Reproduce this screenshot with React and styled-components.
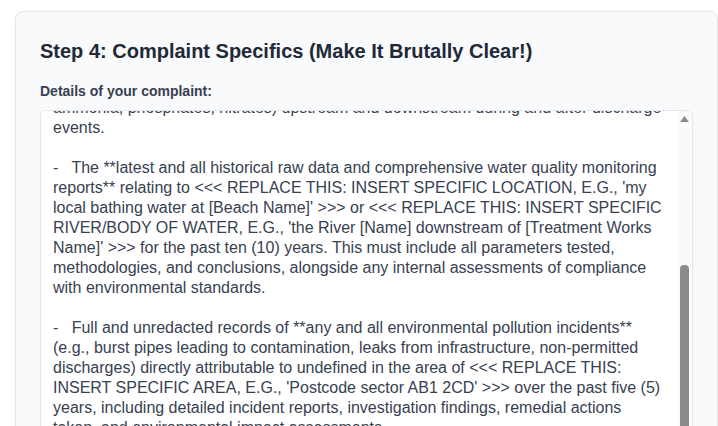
import React, { useLayoutEffect, useRef, useState } from 'react';
import styled, { createGlobalStyle } from 'styled-components';

const GlobalStyle = createGlobalStyle`
  html, body {
    margin: 0;
    padding: 0;
    background: #ffffff;
    overflow: hidden;
  }
  body {
    font-family: "Liberation Sans", Arial, sans-serif;
  }
`;

const Page = styled.div`
  padding: 11px 0 0 15px;
`;

const Card = styled.section`
  width: 703px;
  box-sizing: border-box;
  background: #f9fafb;
  border: 1px solid #e5e7eb;
  border-radius: 8px;
  padding: 25px 24px 24px;
  min-height: 600px;
`;

const Heading = styled.h2`
  margin: 0 0 16px 0;
  font-size: 20px;
  line-height: 28px;
  font-weight: 700;
  color: #1f2937;
`;

const Label = styled.label`
  display: block;
  margin-bottom: 9px;
  font-size: 14px;
  line-height: 20px;
  font-weight: 700;
  color: #374151;
`;

const Field = styled.div`
  position: relative;
`;

const Area = styled.textarea`
  display: block;
  width: 100%;
  height: 520px;
  box-sizing: border-box;
  margin: 0;
  padding: 12px 27px 12px 12px;
  border: 1px solid #e5e7eb;
  border-radius: 6px;
  background: #ffffff;
  box-shadow: 0 1px 2px rgba(0, 0, 0, 0.06);
  font-family: "Liberation Sans", Arial, sans-serif;
  font-size: 16px;
  line-height: 20px;
  color: #374151;
  resize: none;
  outline: none;
`;

/* drawn scrollbar: the browser here hides native ones */
const Track = styled.div`
  position: absolute;
  top: 1px;
  right: 1px;
  bottom: 1px;
  width: 15px;
  display: flex;
  flex-direction: column;
  background: #fafafa;
  border-radius: 0 5px 5px 0;
  pointer-events: none;
`;

const ArrowButton = styled.div`
  flex: 0 0 15px;
  display: flex;
  align-items: center;
  justify-content: center;
`;

const Rail = styled.div`
  flex: 1;
  display: flex;
  flex-direction: column;
  align-items: center;
`;

const Thumb = styled.div`
  width: 9px;
  background: #8b8b8b;
  border-radius: 4px;
`;

const prefix = `Dear Sir/Madam,

I am writing to make a formal request for environmental information under the Environmental Information Regulations 2004 (EIR). I require the following information to be provided in full, without delay, and in any event within the statutory time limit of twenty (20) working days:

-   Complete and unredacted records of **all sewage discharge events** from any Combined Sewer Overflows (CSOs), Storm Overflows, or Emergency Overflows operated by undefined that discharge into or near <<< REPLACE THIS: INSERT SPECIFIC LOCATION >>> for the past ten (10) years, including the date, start time, duration and estimated volume of each event.

-   All Event Duration Monitoring (EDM) data, including periods where monitors were faulty, offline or otherwise not recording, together with explanations for any such periods.

-   All water quality sampling results for key pollutants (e.g., E. coli, intestinal enterococci,
ammonia, phosphates, nitrates) upstream and downstream during and after discharge`;

const rest = ` events.

-   The **latest and all historical raw data and comprehensive water quality monitoring reports** relating to <<< REPLACE THIS: INSERT SPECIFIC LOCATION, E.G., 'my local bathing water at [Beach Name]' >>> or <<< REPLACE THIS: INSERT SPECIFIC RIVER/BODY OF WATER, E.G., 'the River [Name] downstream of [Treatment Works Name]' >>> for the past ten (10) years. This must include all parameters tested, methodologies, and conclusions, alongside any internal assessments of compliance with environmental standards.

-   Full and unredacted records of **any and all environmental pollution incidents** (e.g., burst pipes leading to contamination, leaks from infrastructure, non-permitted discharges) directly attributable to undefined in the area of <<< REPLACE THIS: INSERT SPECIFIC AREA, E.G., 'Postcode sector AB1 2CD' >>> over the past five (5) years, including detailed incident reports, investigation findings, remedial actions taken, and environmental impact assessments.

-   Copies of all **Environmental Permits**, discharge consents and associated conditions for any treatment works or overflows affecting <<< REPLACE THIS: INSERT SPECIFIC LOCATION >>>, together with any variations, breaches or enforcement notices issued by the Environment Agency.

-   All internal and external correspondence, minutes, and reports concerning **capacity, maintenance and investment** at [Treatment Works Name] over the past five (5) years, including any plans to reduce the frequency of storm overflow discharges.

-   Any **complaints received from members of the public** regarding odour, sewage debris, discoloured water or illness linked to water contact in <<< REPLACE THIS: INSERT SPECIFIC LOCATION >>> over the past five (5) years, and your responses to them.

-   A full breakdown of **expenditure on maintenance and upgrades** to the sewer network serving this area, alongside projected spend for the next five (5) years.

-   Copies of all **pollution reports submitted to the Environment Agency** for this area, including self-reported incidents and any follow-up correspondence.

-   Details of any **fines, penalties, undertakings or prosecutions** relating to pollution in this area, and the measures taken as a result.

I would like to remind you that under Regulation 12(2) of the EIR there is a presumption in favour of disclosure. If you intend to withhold any information, please specify the exact exception relied upon and provide a full public interest test.

Please provide the information in electronic format by email. I look forward to your prompt and complete response.

Yours faithfully,
[Your Name]`;

const ARROW = 15;

function ScrollBar({ top, height }) {
  return (
    <Track>
      <ArrowButton>
        <svg width="9" height="6" viewBox="0 0 9 6">
          <polygon points="4.5,0 9,6 0,6" fill="#8b8b8b" />
        </svg>
      </ArrowButton>
      <Rail>
        <Thumb style={{ marginTop: top, height }} />
      </Rail>
      <ArrowButton>
        <svg width="9" height="6" viewBox="0 0 9 6">
          <polygon points="0,0 9,0 4.5,6" fill="#8b8b8b" />
        </svg>
      </ArrowButton>
    </Track>
  );
}

function ComplaintBox() {
  const ref = useRef(null);
  const [thumb, setThumb] = useState({ top: 0, height: 0 });

  useLayoutEffect(() => {
    const el = ref.current;
    // measure the text above the visible part to scroll it into place
    el.style.height = '0px';
    el.value = prefix;
    const above = el.scrollHeight;
    el.value = prefix + rest;
    el.style.height = '';
    el.scrollTop = above - 19;

    const track = el.clientHeight - ARROW * 2;
    setThumb({
      top: (el.scrollTop / el.scrollHeight) * track,
      height: (el.clientHeight / el.scrollHeight) * track,
    });
  }, []);

  return (
    <Field>
      <Area id="complaint" ref={ref} defaultValue={prefix + rest} />
      <ScrollBar top={thumb.top} height={thumb.height} />
    </Field>
  );
}

export default function App() {
  return (
    <>
      <GlobalStyle />
      <Page>
        <Card>
          <Heading>Step 4: Complaint Specifics (Make It Brutally Clear!)</Heading>
          <Label htmlFor="complaint">Details of your complaint:</Label>
          <ComplaintBox />
        </Card>
      </Page>
    </>
  );
}
